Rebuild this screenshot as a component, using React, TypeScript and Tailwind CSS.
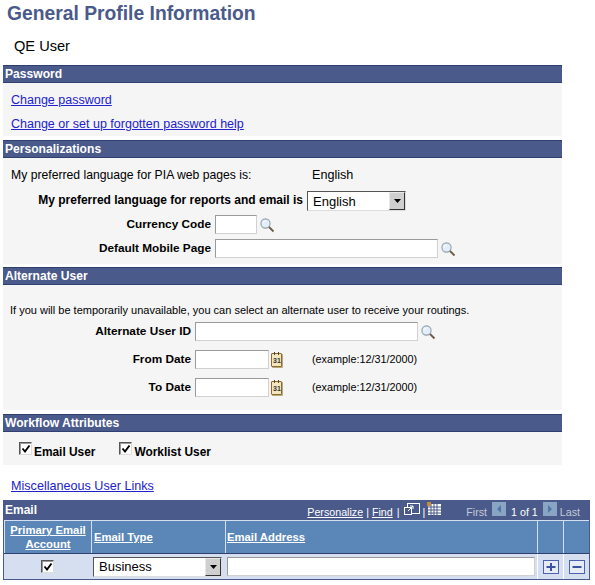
const font = "font-['Liberation_Sans',Arial,sans-serif]";

function SectionHeader({ title }: { title: string }) {
  return (
    <div className="h-[18px] w-[559px] border-y border-[#2f3f6f] bg-[#4a5a8a] pl-[2px] pt-[1px] text-[12.1px] font-bold leading-[15px] text-white">
      {title}
    </div>
  );
}

function Lookup({ className = "" }: { className?: string }) {
  return (
    <svg width="16" height="16" viewBox="0 0 16 16" className={className}>
      <path d="M9.5 9.5 L14.5 14.5" stroke="#6b5a48" strokeWidth="1.8" />
      <circle cx="6.5" cy="6.5" r="4.6" fill="#e4eef8" stroke="#8fa0ae" strokeWidth="1.1" />
      <path d="M4 6.5a2.6 2.6 0 0 1 2.4-2.5" fill="none" stroke="#ffffff" strokeWidth="1" />
    </svg>
  );
}

function Calendar() {
  return (
    <div className="relative ml-[1px] h-[14px] w-[11px] rounded-[1px] border border-[#8a6a30] bg-[#f4e6bc] shadow-[1px_1px_0_#b9a878]">
      <div className="absolute -top-[2px] left-[2px] h-[3px] w-[1px] bg-[#5a4520]" />
      <div className="absolute -top-[2px] left-[6px] h-[3px] w-[1px] bg-[#5a4520]" />
      <span className="absolute left-[1px] top-[3px] text-[7px] font-bold leading-[8px] text-[#333]">31</span>
    </div>
  );
}

function TextBox({ className }: { className: string }) {
  return (
    <input
      type="text"
      className={`border border-t-[#9a9a9a] border-l-[#9a9a9a] border-r-[#d0d0d0] border-b-[#d0d0d0] bg-white ${className}`}
    />
  );
}

function SelectBox({ value, className }: { value: string; className: string }) {
  return (
    <div
      className={`flex items-center border border-t-[#555] border-l-[#555] border-r-[#ddd] border-b-[#ddd] bg-white text-[13px] text-black ${className}`}
    >
      <span className="flex-1 pl-[5px] leading-none">{value}</span>
      <span className="flex h-full w-[16px] items-center justify-center border border-t-[#e8e8e8] border-l-[#e8e8e8] border-r-[#333] border-b-[#333] bg-[#cfcfcf]">
        <svg width="7" height="4" viewBox="0 0 7 4">
          <path d="M0 0h7L3.5 4z" fill="#000" />
        </svg>
      </span>
    </div>
  );
}

function CheckBox() {
  return (
    <span className="flex h-[13px] w-[13px] items-center justify-center border border-t-[#555] border-l-[#555] border-r-[#ddd] border-b-[#ddd] bg-white shadow-[inset_1px_1px_0_#9a9a9a]">
      <svg width="10" height="10" viewBox="0 0 10 10">
        <path d="M1.5 4.5 L4 7.5 L8.5 1.5" fill="none" stroke="#000" strokeWidth="1.9" />
      </svg>
    </span>
  );
}

function FormRow({
  label,
  labelWidth,
  labelSize = "text-[11.8px]",
  className = "",
  children,
}: {
  label: string;
  labelWidth: string;
  labelSize?: string;
  className?: string;
  children: React.ReactNode;
}) {
  return (
    <div className={`flex items-start ${className}`}>
      <div className={`pt-[2px] text-right font-bold leading-[15px] text-black ${labelSize} ${labelWidth}`}>{label}</div>
      <div className="ml-[4px] flex items-start">{children}</div>
    </div>
  );
}

function NavSquare({ dir }: { dir: "left" | "right" }) {
  return (
    <svg width="14" height="14" viewBox="0 0 14 14">
      <rect width="14" height="14" fill="#8aa4c4" />
      <path d={dir === "left" ? "M9 3v8L5 7z" : "M5 3v8l4-4z"} fill="#4f78a8" />
    </svg>
  );
}

function GridButton({ minus }: { minus?: boolean }) {
  return (
    <svg width="16" height="14" viewBox="0 0 16 14">
      <rect x="0.5" y="0.5" width="15" height="13" fill="#e6ebf6" stroke="#4a62b0" />
      <path d="M3.5 7h9" stroke="#3a52a0" strokeWidth="2" />
      {!minus && <path d="M8 3v8" stroke="#3a52a0" strokeWidth="2" />}
    </svg>
  );
}

function HeadCell({ className, children }: { className: string; children?: React.ReactNode }) {
  return (
    <div className={`flex h-full items-center border-l border-t border-[#d5dff0] bg-[#5b87b8] text-[11.3px] font-bold leading-[14px] text-white underline ${className}`}>
      {children}
    </div>
  );
}

export default function App() {
  return (
    <div className={`h-[585px] w-[595px] overflow-hidden bg-white pl-[3px] ${font}`}>
      <h1 className="ml-[4px] pt-[3px] text-[19.3px] font-bold leading-[22px] text-[#4a5a8a]">
        General Profile Information
      </h1>
      <div className="ml-[11px] mt-[13px] text-[14.6px] leading-[16px] text-black">QE User</div>

      <div className="mt-[11px]">
        <SectionHeader title="Password" />
        <div className="h-[53px] w-[559px] bg-[#f5f5f5] pl-[8px] pt-[10px] text-[12.5px] leading-[15px] text-[#2222cc] underline">
          <div>Change password</div>
          <div className="mt-[9px]">Change or set up forgotten password help</div>
        </div>
      </div>

      <div className="mt-[4px]">
        <SectionHeader title="Personalizations" />
        <div className="h-[106px] w-[559px] bg-[#f5f5f5] pt-[10px] text-[12.2px] text-black">
          <div className="flex leading-[15px]">
            <span className="ml-[8px] w-[301px]">My preferred language for PIA web pages is:</span>
            <span className="text-[12.6px]">English</span>
          </div>
          <FormRow
            label="My preferred language for reports and email is"
            labelWidth="w-[300px]"
            labelSize="text-[12px]"
            className="mt-[8px]"
          >
            <SelectBox value="English" className="h-[20px] w-[99px]" />
          </FormRow>
          <FormRow label="Currency Code" labelWidth="w-[208px]" className="mt-[4px]">
            <TextBox className="h-[19px] w-[42px]" />
            <Lookup className="ml-[2px] mt-[2px]" />
          </FormRow>
          <FormRow label="Default Mobile Page" labelWidth="w-[208px]" className="mt-[5px]">
            <TextBox className="h-[19px] w-[223px]" />
            <Lookup className="ml-[2px] mt-[2px]" />
          </FormRow>
        </div>
      </div>

      <div className="mt-[3px]">
        <SectionHeader title="Alternate User" />
        <div className="h-[125px] w-[559px] bg-[#f5f5f5] pt-[18px] text-[11px] text-black">
          <div className="ml-[7px] leading-[15px]">
            If you will be temporarily unavailable, you can select an alternate user to receive your routings.
          </div>
          <FormRow label="Alternate User ID" labelWidth="w-[188px]" className="mt-[4px]">
            <TextBox className="h-[19px] w-[223px]" />
            <Lookup className="ml-[2px] mt-[2px]" />
          </FormRow>
          <FormRow label="From Date" labelWidth="w-[188px]" className="mt-[9px]">
            <TextBox className="h-[19px] w-[74px]" />
            <div className="ml-[1px] mt-[3px]">
              <Calendar />
            </div>
            <span className="ml-[30px] mt-[2px] text-[10.8px] leading-[15px]">(example:12/31/2000)</span>
          </FormRow>
          <FormRow label="To Date" labelWidth="w-[188px]" className="mt-[9px]">
            <TextBox className="h-[19px] w-[74px]" />
            <div className="ml-[1px] mt-[3px]">
              <Calendar />
            </div>
            <span className="ml-[30px] mt-[2px] text-[10.8px] leading-[15px]">(example:12/31/2000)</span>
          </FormRow>
        </div>
      </div>

      <div className="mt-[4px]">
        <SectionHeader title="Workflow Attributes" />
        <div className="flex h-[33px] w-[559px] items-center bg-[#f5f5f5] pl-[16px] text-[11.9px] font-bold text-black">
          <CheckBox />
          <span className="ml-[2px] mt-[8px]">Email User</span>
          <span className="ml-[24px]">
            <CheckBox />
          </span>
          <span className="ml-[2px] mt-[8px]">Worklist User</span>
        </div>
      </div>

      <div className="ml-[8px] mt-[14px] text-[12.6px] leading-[15px] text-[#2222cc] underline">Miscellaneous User Links</div>

      <div className="mt-[6px] w-[587px] border border-[#4a5a8a] border-t-0">
        <div className="flex h-[20px] items-center bg-[#4a5a8a] text-[10.7px] text-white">
          <span className="pl-[1px] text-[12px] font-bold">Email</span>
          <div className="ml-auto flex items-center pr-[9px]">
            <span className="mt-[5px] underline">Personalize</span>
            <span className="mt-[5px] px-[3px]">|</span>
            <span className="mt-[5px] underline">Find</span>
            <span className="mt-[5px] pl-[4px] pr-[5px]">|</span>
            <svg width="16" height="13" viewBox="0 0 16 13" className="-mt-[2px]">
              <rect x="3.5" y="0.5" width="12" height="10" fill="none" stroke="#fff" />
              <rect x="0.5" y="4.5" width="7" height="7" fill="#4a5a8a" stroke="#fff" />
              <path d="M4 8l5-5M6 3h3v3" stroke="#fff" fill="none" />
            </svg>
            <span className="mt-[5px] px-[2px]">|</span>
            <svg width="14" height="13" viewBox="0 0 14 13" className="-mt-[4px]">
              <rect x="1" y="2" width="13" height="11" fill="#fff" />
              <path d="M4 2v11M7 2v11M10 2v11M1 5h13M1 8h13M1 11h13" stroke="#4a5a8a" />
              <rect x="0" y="0" width="4" height="4" fill="#c08a40" />
            </svg>
            <span className="ml-[25px] mt-[5px] text-[#c4c9d8]">First</span>
            <span className="ml-[5px] -mt-[2px]">
              <NavSquare dir="left" />
            </span>
            <span className="ml-[5px] mt-[5px]">1 of 1</span>
            <span className="ml-[5px] -mt-[2px]">
              <NavSquare dir="right" />
            </span>
            <span className="ml-[3px] mt-[5px] text-[#c4c9d8]">Last</span>
          </div>
        </div>
        <div className="flex h-[34px] border-b border-[#2f3f6f]">
          <HeadCell className="w-[87px] justify-center text-center">
            <span>
              Primary Email
              <br />
              Account
            </span>
          </HeadCell>
          <HeadCell className="w-[134px] pl-[2px]">Email Type</HeadCell>
          <HeadCell className="w-[312px] pl-[1px]">Email Address</HeadCell>
          <HeadCell className="w-[26px]" />
          <HeadCell className="w-[26px]" />
        </div>
        <div className="flex h-[25px] bg-[#d5dff0]">
          <div className="flex w-[87px] items-center justify-center">
            <CheckBox />
          </div>
          <div className="flex w-[134px] items-center pl-[2px]">
            <SelectBox value="Business" className="h-[20px] w-[129px]" />
          </div>
          <div className="flex w-[312px] items-center pl-[2px]">
            <TextBox className="h-[19px] w-[308px]" />
          </div>
          <div className="flex w-[26px] items-center justify-center border-l border-white">
            <GridButton />
          </div>
          <div className="flex w-[26px] items-center justify-center border-l border-white">
            <GridButton minus />
          </div>
        </div>
      </div>
    </div>
  );
}
